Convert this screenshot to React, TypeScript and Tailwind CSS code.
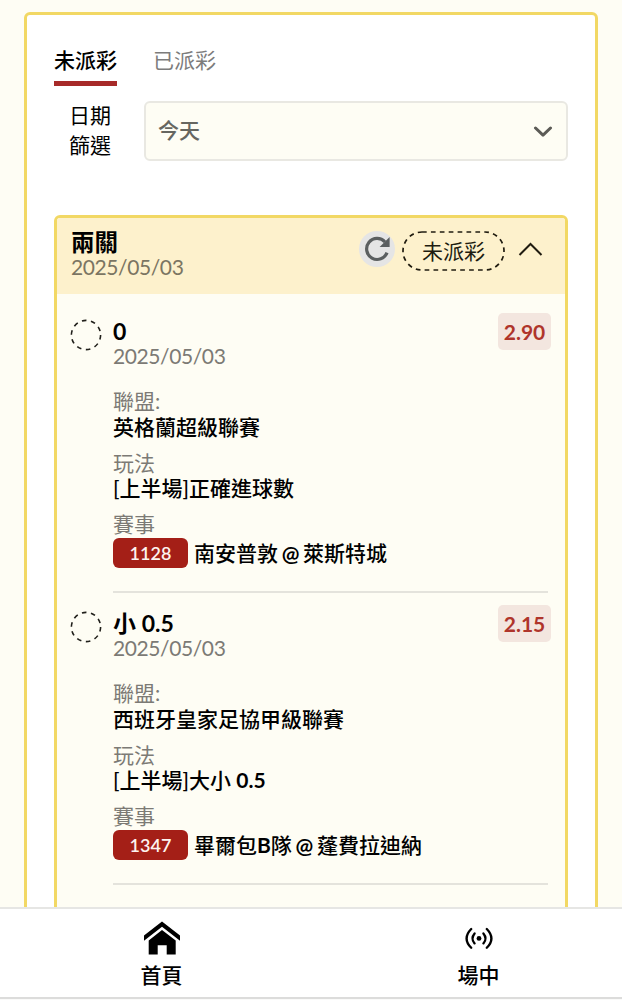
import React from 'react';

interface Bet {
  pick: string;
  date: string;
  odds: string;
  league: string;
  play: string;
  code: string;
  match: string;
}

const bets: Bet[] = [
  {
    pick: '0',
    date: '2025/05/03',
    odds: '2.90',
    league: '英格蘭超級聯賽',
    play: '[上半場]正確進球數',
    code: '1128',
    match: '南安普敦 @ 萊斯特城',
  },
  {
    pick: '小 0.5',
    date: '2025/05/03',
    odds: '2.15',
    league: '西班牙皇家足協甲級聯賽',
    play: '[上半場]大小 0.5',
    code: '1347',
    match: '畢爾包B隊 @ 蓬費拉迪納',
  },
];

/* Latin runs carry a heavier weight than the surrounding Chinese text. */
function Mixed({ text }: { text: string }) {
  return (
    <>
      {text.split(/([0-9.@A-Z]+)/).map((part, i) =>
        i % 2 ? (
          <span key={i} className="font-bold">
            {part}
          </span>
        ) : (
          part
        ),
      )}
    </>
  );
}

function Tabs() {
  return (
    <div className="flex gap-[36px]">
      <div className="flex w-[63px] flex-col">
        <span className="h-[30px] whitespace-nowrap font-medium leading-[30px] text-black">未派彩</span>
        <span className="mt-[6px] h-[5px] bg-[#a72a29]" />
      </div>
      <span className="h-[30px] leading-[30px] text-[#7c7c7c]">已派彩</span>
    </div>
  );
}

function DateFilter() {
  return (
    <div className="mt-[15px] flex">
      <div className="-mt-px w-[57px] text-right leading-[30px] text-black">
        日期
        <br />
        篩選
      </div>
      <div className="ml-[33px] flex h-[60px] flex-1 items-center justify-between rounded-[6px] border-2 border-[#e9e8e2] bg-[#fefdf4] pl-3 pr-[13px]">
        <span className="-mt-0.5 font-medium text-[#666660]">今天</span>
        <svg width="20" height="12" viewBox="0 0 20 12" fill="none" className="mt-0.5">
          <path d="M2.5 2 L10 9.2 L17.5 2" stroke="#5c5b56" strokeWidth="3" strokeLinecap="round" strokeLinejoin="round" />
        </svg>
      </div>
    </div>
  );
}

function SlipHeader() {
  return (
    <div className="flex h-[76px] justify-between bg-[#fdf1cc] pl-[14px] pr-[22px]">
      <div className="pt-[11px]">
        <div className="h-[26px] text-[23.5px] font-bold leading-[26px] text-black">兩關</div>
        <div className="h-[24px] leading-[24px] tracking-[-0.4px] text-[#7b7562]">2025/05/03</div>
      </div>
      <div className="flex pt-[13px]">
        <span className="flex size-9 items-center justify-center rounded-full bg-[#e5e5e5]">
          <svg width="26" height="26" viewBox="0 0 26 26" fill="none">
            <path d="M23 16.6 A10.5 10.5 0 1 1 21 6" stroke="#5b5f60" strokeWidth="3.2" />
            <path d="M25.6 1 V11 H15.6 Z" fill="#5b5f60" />
          </svg>
        </span>
        <span className="relative ml-[7px] flex h-10 w-[103px] items-center justify-center leading-10 text-[#201c10]">
          <svg width="103" height="40" viewBox="0 0 103 40" className="absolute inset-0">
            <rect x="1" y="1" width="101" height="38" rx="19" fill="none" stroke="#201c10" strokeWidth="1.7" strokeDasharray="4.7 4.2" />
          </svg>
          未派彩
        </span>
        <svg width="25" height="16" viewBox="0 0 25 16" fill="none" className="ml-[13px] mt-[10px]">
          <path d="M1.5 14 L12.5 3 L23.5 14" stroke="#201c10" strokeWidth="2" />
        </svg>
      </div>
    </div>
  );
}

function Field({ label, children }: { label: string; children: React.ReactNode }) {
  return (
    <div className="mb-[10px]">
      <div className="h-[25.5px] leading-[26px] text-[#7c7a75]">{label}</div>
      <div className="h-[26px] whitespace-nowrap font-medium leading-[25px] text-black">{children}</div>
    </div>
  );
}

function BetItem({ bet }: { bet: Bet }) {
  return (
    <div className="flex h-[292px] pl-[13px] pr-[14px]">
      <svg width="32" height="32" viewBox="0 0 32 32" fill="none" className="mt-[18px] shrink-0">
        <circle cx="16" cy="16" r="14.6" stroke="#201f1a" strokeWidth="1.6" strokeDasharray="4.6 4.574" />
      </svg>
      <div className="ml-[11px] flex flex-1 flex-col">
        <div className="flex h-[87px] justify-between">
          <div className="pt-[18px]">
            <div className="h-[24px] text-[23px] font-semibold leading-[24px] text-black">
              <Mixed text={bet.pick} />
            </div>
            <div className="h-[26px] leading-[26px] tracking-[-0.4px] text-[#7c7a75]">{bet.date}</div>
          </div>
          <span className="mt-[12px] flex h-[37px] w-[53px] items-center justify-center rounded-[5px] bg-[#f3e6df] font-bold text-[#af352b]">
            {bet.odds}
          </span>
        </div>
        <div className="mr-[3px] flex-1 border-b-2 border-[#e4e3dc]">
          <Field label="聯盟:">
            <Mixed text={bet.league} />
          </Field>
          <Field label="玩法">
            <Mixed text={bet.play} />
          </Field>
          <div className="h-[26px] leading-[26px] text-[#7c7a75]">賽事</div>
          <div className="mt-px flex items-center whitespace-nowrap font-medium text-black">
            <span className="mr-[6px] flex h-[30px] w-[75px] items-center justify-center rounded-[6px] bg-[#a41f17] pt-px text-[18px] font-semibold text-[#fdf3ef]">
              {bet.code}
            </span>
            <span className="leading-[30px] [word-spacing:-1.6px]">
              <Mixed text={bet.match} />
            </span>
          </div>
        </div>
      </div>
    </div>
  );
}

function BottomNav() {
  return (
    <nav className="flex h-[93px] shrink-0 flex-col border-t-2 border-[#e6e6e4] bg-[#fafaf9] font-medium text-black">
      <div className="flex h-[90px] border-b-2 border-[#dcdcdb] bg-white">
        <div className="flex w-[323px] shrink-0 flex-col items-center pt-[12px]">
          <svg width="38" height="34" viewBox="0 0 38 34" fill="#000">
            <path d="M19 0.5 L37 14.5 V19.8 L19 5.8 L1 19.8 V14.5 Z" />
            <path d="M19 9 L32.7 19.5 V33.5 H23.7 V24.3 H14.7 V33.5 H5.7 V19.5 Z" />
          </svg>
          <span className="mt-[5px] h-[30px] leading-[30px]">首頁</span>
        </div>
        <div className="flex w-[311px] shrink-0 flex-col items-center pt-[12px]">
          <svg width="30" height="34" viewBox="0 0 30 34" fill="none" stroke="#000" strokeWidth="2.3" strokeLinecap="round">
            <circle cx="15" cy="17.4" r="2.4" fill="#000" stroke="none" />
            <path d="M10.6 12.4 Q6.4 17.4 10.6 22.4 M19.4 12.4 Q23.6 17.4 19.4 22.4" />
            <path d="M7.2 8 Q-2 17.4 7.2 26.8 M22.8 8 Q32 17.4 22.8 26.8" />
          </svg>
          <span className="mt-[5px] h-[30px] leading-[30px]">場中</span>
        </div>
      </div>
    </nav>
  );
}

export default function App() {
  return (
    <div className="flex h-[1000px] w-[622px] flex-col overflow-hidden bg-[#fefdf4] font-['Lato','Noto_Sans_CJK_TC',sans-serif] text-[21px]">
      <main className="h-[907px] shrink-0 overflow-hidden pl-6 pt-3">
        <section className="h-[960px] w-[574px] rounded-[6px] border-[3px] border-[#f2d864] bg-white px-[27px] pt-[30px]">
          <Tabs />
          <DateFilter />
          <div className="mt-[54px] h-[800px] overflow-hidden rounded-[6px] border-[3px] border-[#f2d864] bg-[#fefdf4]">
            <SlipHeader />
            <div className="pt-[7px]">
              {bets.map((bet) => (
                <BetItem key={bet.code} bet={bet} />
              ))}
            </div>
          </div>
        </section>
      </main>
      <BottomNav />
    </div>
  );
}
